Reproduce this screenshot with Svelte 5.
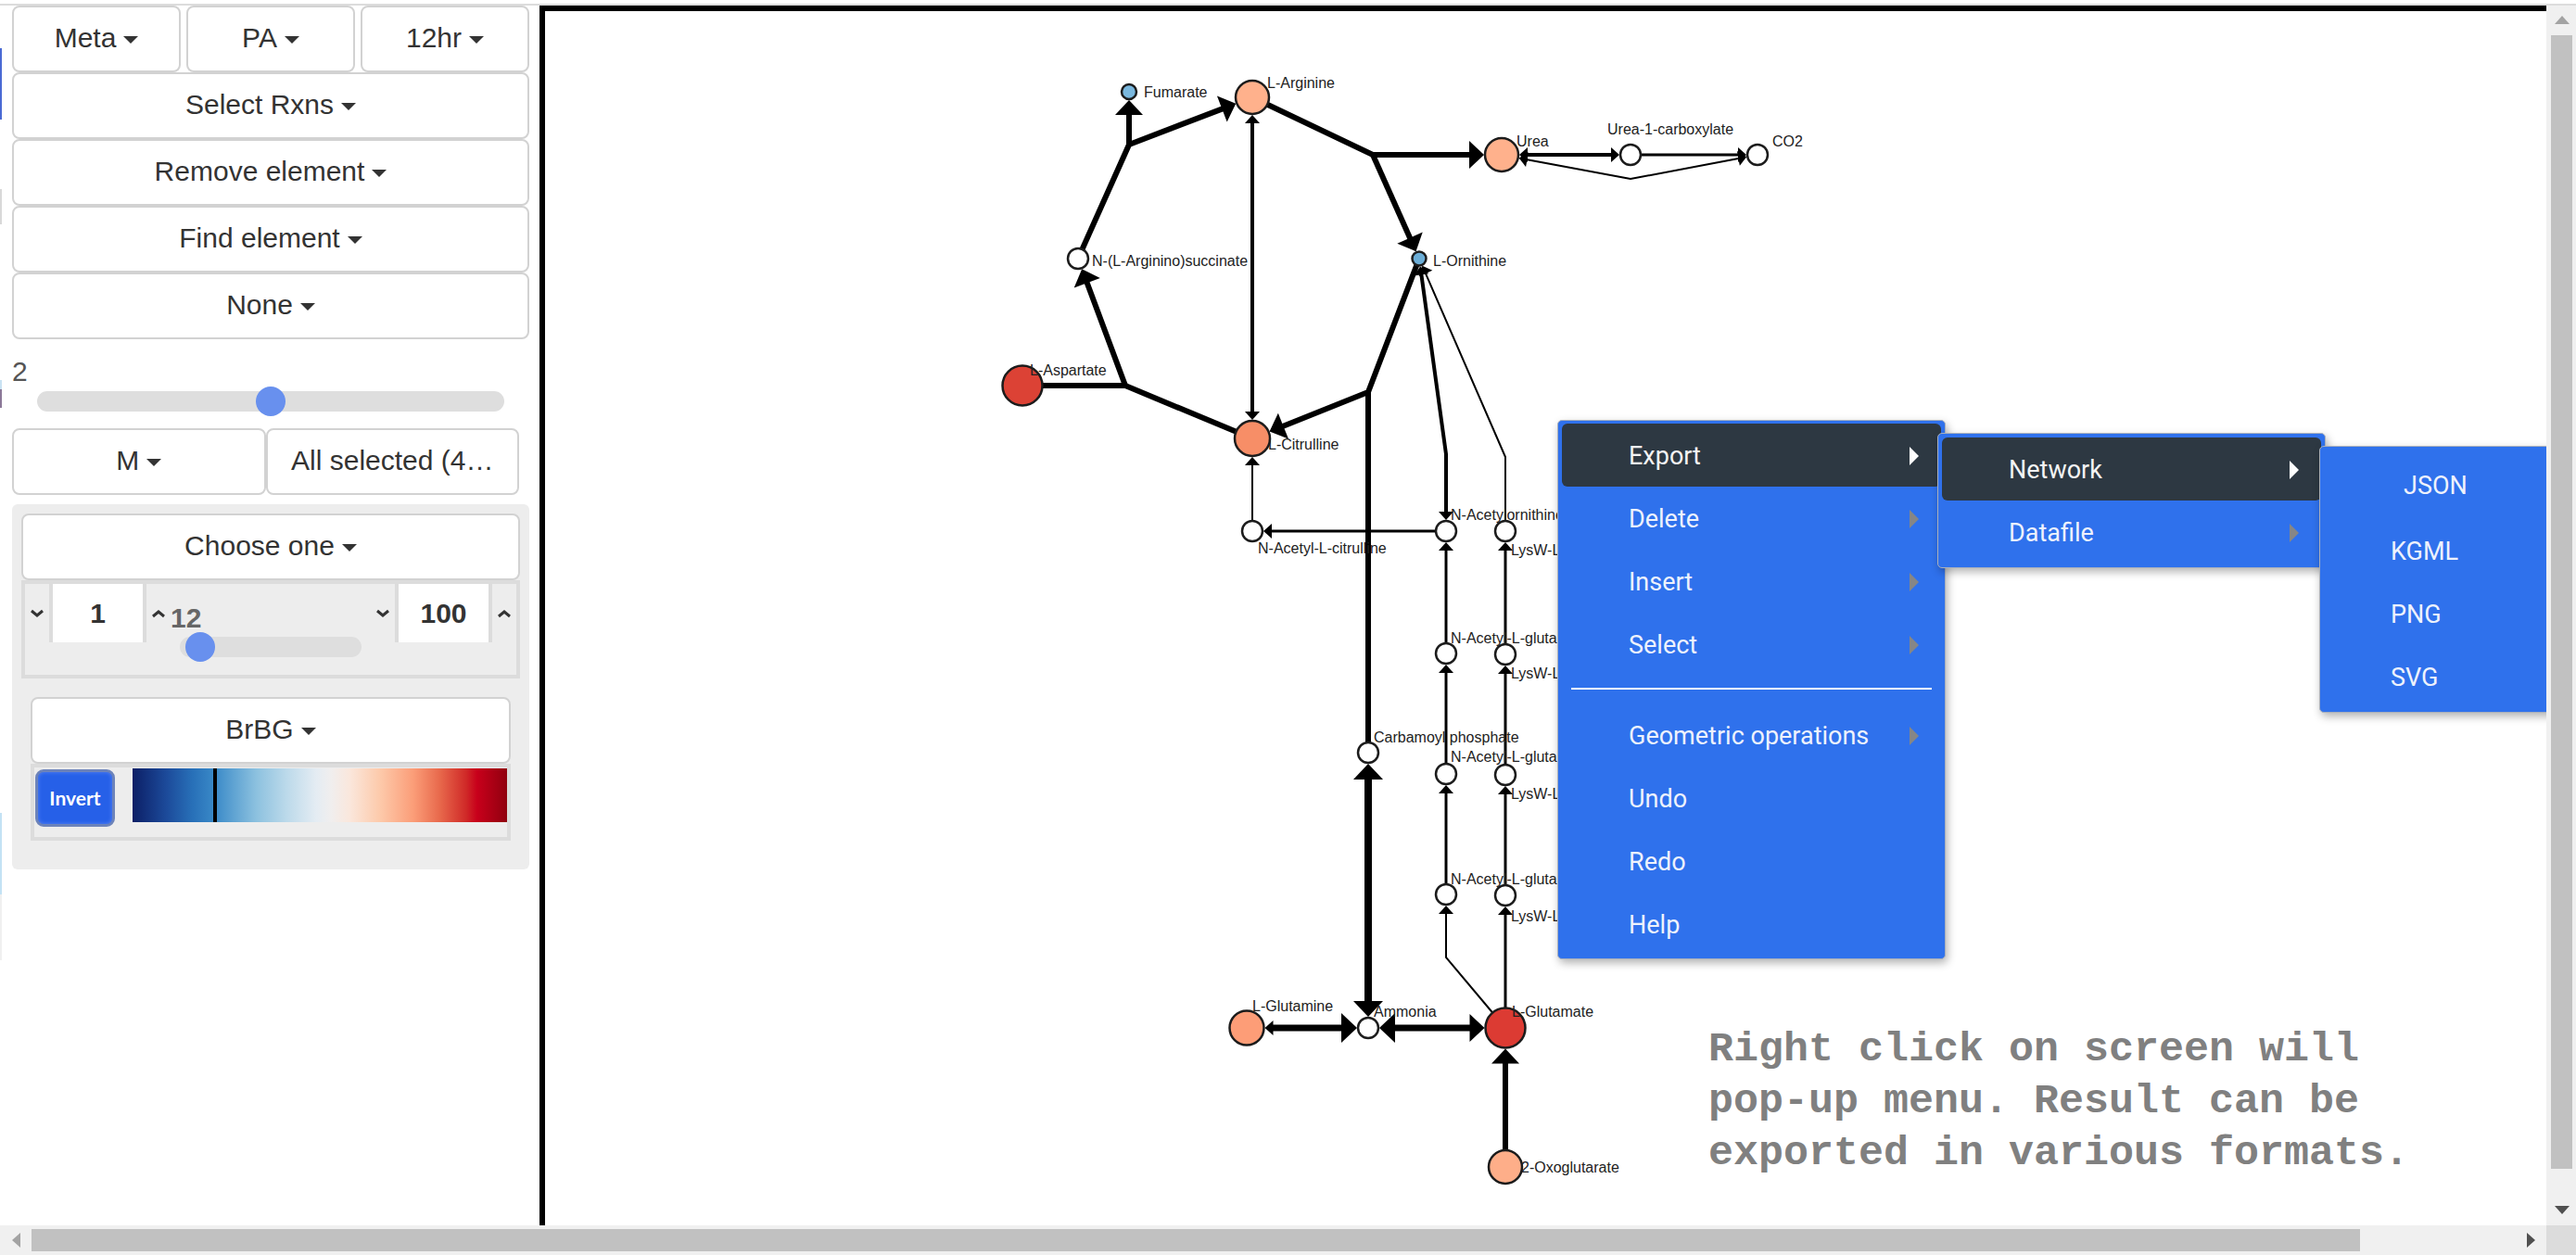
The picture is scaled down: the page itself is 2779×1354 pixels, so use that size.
<script>
  let lineWidth = $state(2);
  let level = $state(12);
  let lower = $state('1');
  let upper = $state('100');
  let scrollY = 97.7;
  let scrollX = 93.7;

  const nodes = {
    fumarate: { x: 630, y: 87, r: 8, fill: '#7ab8de' },
    arginine: { x: 763, y: 93, r: 18, fill: '#ffb18c' },
    argSucc: { x: 575, y: 267, r: 11, fill: '#ffffff' },
    aspartate: { x: 515, y: 404, r: 21.5, fill: '#dc4235' },
    citrulline: { x: 763, y: 461, r: 19, fill: '#f78e67' },
    ornithine: { x: 943, y: 267, r: 7.5, fill: '#6badd6' },
    urea: { x: 1032, y: 155, r: 18, fill: '#ffb18c' },
    ureaCarb: { x: 1171, y: 155, r: 11, fill: '#ffffff' },
    co2: { x: 1308, y: 155, r: 11, fill: '#ffffff' },
    acCit: { x: 763, y: 561, r: 11, fill: '#ffffff' },
    ac1: { x: 972, y: 561, r: 11, fill: '#ffffff' },
    ac2: { x: 972, y: 693, r: 11, fill: '#ffffff' },
    ac3: { x: 972, y: 823, r: 11, fill: '#ffffff' },
    ac4: { x: 972, y: 953, r: 11, fill: '#ffffff' },
    lys1: { x: 1036, y: 561, r: 11, fill: '#ffffff' },
    lys2: { x: 1036, y: 694, r: 11, fill: '#ffffff' },
    lys3: { x: 1036, y: 824, r: 11, fill: '#ffffff' },
    lys4: { x: 1036, y: 954, r: 11, fill: '#ffffff' },
    carbamoyl: { x: 888, y: 800, r: 11, fill: '#ffffff' },
    ammonia: { x: 888, y: 1097, r: 11, fill: '#ffffff' },
    glutamate: { x: 1036, y: 1097, r: 21.5, fill: '#dc3b33' },
    glutamine: { x: 757, y: 1097, r: 18.5, fill: '#fd9d77' },
    oxoglutarate: { x: 1036, y: 1247, r: 18, fill: '#feae89' }
  };

  // Reaction junctions and bends, which have no marker of their own.
  const joints = {
    jFum: { x: 630, y: 144, r: 0 },
    jAsp: { x: 626, y: 404, r: 0 },
    jCarb: { x: 888, y: 411, r: 0 },
    jUrea: { x: 893, y: 155, r: 0 },
    bAc: { x: 972, y: 478, r: 0 },
    bLys: { x: 1036, y: 481, r: 0 },
    bGlu: { x: 972, y: 1021, r: 0 },
    bCo2: { x: 1171, y: 181, r: 0 }
  };
  const all = { ...nodes, ...joints };

  // [path, stroke width, arrow size at start, arrow size at end]
  const edges = [
    [['argSucc', 'jFum', 'fumarate'], 6, 0, 15],
    [['jFum', 'arginine'], 6, 0, 15],
    [['arginine', 'jUrea', 'urea'], 6, 0, 15],
    [['jUrea', 'ornithine'], 6, 0, 15],
    [['ornithine', 'jCarb', 'citrulline'], 6, 0, 15],
    [['jCarb', 'carbamoyl'], 6, 0, 0],
    [['aspartate', 'jAsp', 'argSucc'], 6, 0, 15],
    [['citrulline', 'jAsp'], 6, 0, 0],
    [['arginine', 'citrulline'], 4, 8, 8],
    [['acCit', 'citrulline'], 2, 0, 8],
    [['ac1', 'acCit'], 3, 0, 8],
    [['ornithine', 'bAc', 'ac1'], 4, 8, 8],
    [['ornithine', 'bLys', 'lys1'], 2, 8, 0],
    [['ac2', 'ac1'], 3, 0, 8],
    [['ac3', 'ac2'], 3, 0, 8],
    [['ac4', 'ac3'], 3, 0, 8],
    [['glutamate', 'bGlu', 'ac4'], 2, 0, 8],
    [['lys2', 'lys1'], 3, 0, 8],
    [['lys3', 'lys2'], 3, 0, 8],
    [['lys4', 'lys3'], 3, 0, 8],
    [['glutamate', 'lys4'], 3, 0, 8],
    [['carbamoyl', 'ammonia'], 8, 16, 16],
    [['glutamine', 'ammonia'], 7, 8, 16],
    [['ammonia', 'glutamate'], 7, 16, 15],
    [['oxoglutarate', 'glutamate'], 6, 0, 15],
    [['urea', 'ureaCarb'], 4, 8, 8],
    [['ureaCarb', 'co2'], 3, 0, 8],
    [['urea', 'bCo2', 'co2'], 2, 8, 8]
  ];

  function head(at, toward, size) {
    const dx = toward.x - at.x;
    const dy = toward.y - at.y;
    const len = Math.hypot(dx, dy);
    const ux = dx / len;
    const uy = dy / len;
    const tx = at.x + ux * (at.r + 1);
    const ty = at.y + uy * (at.r + 1);
    const bx = tx + ux * (size + 1);
    const by = ty + uy * (size + 1);
    return `${tx},${ty} ${bx - uy * size},${by + ux * size} ${bx + uy * size},${by - ux * size}`;
  }

  const drawn = edges.map(([path, width, start, end]) => {
    const pts = path.map((id) => all[id]);
    const n = pts.length;
    // Stop the line inside its arrow head, so that the tip stays sharp.
    const trimmed = pts.map((p, i) => {
      const size = i === 0 ? start : i === n - 1 ? end : 0;
      if (!size) return p;
      const q = i === 0 ? pts[1] : pts[n - 2];
      const len = Math.hypot(q.x - p.x, q.y - p.y);
      const cut = p.r + size / 2 + 2;
      return { x: p.x + ((q.x - p.x) / len) * cut, y: p.y + ((q.y - p.y) / len) * cut };
    });
    const heads = [];
    if (start) heads.push(head(pts[0], pts[1], start));
    if (end) heads.push(head(pts[n - 1], pts[n - 2], end));
    return { width, line: trimmed.map((p) => `${p.x},${p.y}`).join(' '), heads };
  });

  const labels = [
    ['Fumarate', 646, 93],
    ['L-Arginine', 779, 83],
    ['N-(L-Arginino)succinate', 590, 275],
    ['L-Ornithine', 958, 275],
    ['L-Aspartate', 523, 393],
    ['L-Citrulline', 780, 473],
    ['N-Acetyl-L-citrulline', 769, 585],
    ['Urea', 1048, 146],
    ['Urea-1-carboxylate', 1146, 133],
    ['CO2', 1324, 146],
    ['N-Acetylornithine', 977, 549],
    ['LysW-L-ornithine', 1042, 587],
    ['N-Acetyl-L-glutamate', 977, 682],
    ['LysW-L-glutamate', 1042, 720],
    ['N-Acetyl-L-glutamyl', 977, 810],
    ['LysW-L-glutamyl', 1042, 850],
    ['N-Acetyl-L-glutamate', 977, 942],
    ['LysW-L-glutamate', 1042, 982],
    ['Carbamoyl phosphate', 894, 789],
    ['L-Glutamine', 763, 1079],
    ['Ammonia', 894, 1085],
    ['L-Glutamate', 1043, 1085],
    ['2-Oxoglutarate', 1053, 1253]
  ];

  const mainMenu = [
    { text: 'Export', sub: true, active: true },
    { text: 'Delete', sub: true },
    { text: 'Insert', sub: true },
    { text: 'Select', sub: true },
    { rule: true },
    { text: 'Geometric operations', sub: true },
    { text: 'Undo' },
    { text: 'Redo' },
    { text: 'Help' }
  ];
  const exportMenu = [
    { text: 'Network', sub: true, active: true },
    { text: 'Datafile', sub: true }
  ];
  const formatMenu = [{ text: 'JSON', first: true }, { text: 'KGML' }, { text: 'PNG' }, { text: 'SVG' }];
</script>

{#snippet drop(text)}
  <button type="button" class="drop"><span>{text}</span><i class="caret"></i></button>
{/snippet}

{#snippet chevron(up, name)}
  <button type="button" class="step" aria-label={name}>
    <svg width="14" height="10" viewBox="0 0 14 10" aria-hidden="true">
      <path d={up ? 'M1 8 L7 3 L13 8' : 'M1 2 L7 7 L13 2'} fill="none" stroke="#333" stroke-width="3" />
    </svg>
  </button>
{/snippet}

{#snippet menu(items, place)}
  <ul class="menu {place}">
    {#each items as item}
      {#if item.rule}
        <li class="rule"></li>
      {:else}
        <li>
          <button type="button" class="item" class:active={item.active} class:first={item.first}>
            <span>{item.text}</span>
            {#if item.sub}<i class="more"></i>{/if}
          </button>
        </li>
      {/if}
    {/each}
  </ul>
{/snippet}

<div class="app">
  <div class="topline"></div>
  <div class="edge"></div>

  <aside class="side">
    <div class="trio">
      {@render drop('Meta')}
      {@render drop('PA')}
      {@render drop('12hr')}
    </div>
    {@render drop('Select Rxns')}
    {@render drop('Remove element')}
    {@render drop('Find element')}
    {@render drop('None')}

    <label class="value" for="line-width">{lineWidth}</label>
    <input id="line-width" class="range wide" type="range" min="0" max="4" step="1" bind:value={lineWidth} />

    <div class="pair">
      {@render drop('M')}
      <button type="button" class="drop"><span>All selected (4…</span></button>
    </div>

    <section class="panel">
      {@render drop('Choose one')}
      <div class="box bounds">
        {@render chevron(false, 'Decrease lower bound')}
        <input class="num" type="text" aria-label="Lower bound" bind:value={lower} />
        {@render chevron(true, 'Increase lower bound')}
        <div class="mid">
          <label class="level" for="level">{level}</label>
          <input id="level" class="range" type="range" min="6" max="170" bind:value={level} />
        </div>
        {@render chevron(false, 'Decrease upper bound')}
        <input class="num" type="text" aria-label="Upper bound" bind:value={upper} />
        {@render chevron(true, 'Increase upper bound')}
      </div>

      <div class="colors">
        {@render drop('BrBG')}
        <div class="box scale">
          <button type="button" class="invert">Invert</button>
          <div class="ramp"><i class="mark"></i></div>
        </div>
      </div>
    </section>
  </aside>

  <main class="canvas">
    <svg class="graph" role="img" aria-label="Metabolic network">
      {#each drawn as edge}
        <polyline points={edge.line} fill="none" stroke="#000" stroke-width={edge.width} />
        {#each edge.heads as points}
          <polygon {points} />
        {/each}
      {/each}
      {#each Object.values(nodes) as node}
        <circle cx={node.x} cy={node.y} r={node.r} fill={node.fill} stroke="#1c1c1c" stroke-width="2.5" />
      {/each}
      {#each labels as [text, x, y]}
        <text {x} {y}>{text}</text>
      {/each}
    </svg>

    {@render menu(mainMenu, 'root')}
    {@render menu(exportMenu, 'second')}
    {@render menu(formatMenu, 'third')}

    <p class="note">
      Right click on screen will<br />pop-up menu. Result can be<br />exported in various formats.
    </p>
  </main>

  <div class="bar vert">
    <button type="button" class="arrow" aria-label="Scroll up">
      <svg width="16" height="10" viewBox="0 0 16 10" aria-hidden="true"><path d="M0 9 L8 0 L16 9Z" fill="#a3a3a3" /></svg>
    </button>
    <div class="track"><div class="thumb" style:height="{scrollY}%"></div></div>
    <button type="button" class="arrow" aria-label="Scroll down">
      <svg width="16" height="10" viewBox="0 0 16 10" aria-hidden="true"><path d="M0 0 L8 9 L16 0Z" fill="#505050" /></svg>
    </button>
  </div>

  <div class="bar horiz">
    <button type="button" class="arrow" aria-label="Scroll left">
      <svg width="10" height="16" viewBox="0 0 10 16" aria-hidden="true"><path d="M9 0 L0 8 L9 16Z" fill="#a3a3a3" /></svg>
    </button>
    <div class="track"><div class="thumb" style:width="{scrollX}%"></div></div>
    <button type="button" class="arrow" aria-label="Scroll right">
      <svg width="10" height="16" viewBox="0 0 10 16" aria-hidden="true"><path d="M0 0 L9 8 L0 16Z" fill="#505050" /></svg>
    </button>
  </div>
  <div class="corner"></div>
</div>

<style>
  :global(body) {
    margin: 0;
    background: #fff;
  }
  .app,
  .app :global(*) {
    box-sizing: border-box;
  }
  .app {
    display: grid;
    grid-template-columns: 2px 580px minmax(0, 1fr) 32px;
    grid-template-rows: 6px minmax(0, 1fr) 32px;
    height: 100vh;
    overflow: hidden;
    font-family: 'Liberation Sans', Arial, sans-serif;
    font-size: 30px;
    color: #333;
  }
  button,
  input {
    font: inherit;
    color: inherit;
    margin: 0;
  }
  .topline {
    grid-column: 1 / -1;
    margin-top: 4px;
    background: #dcdcdc;
  }
  .edge {
    background: linear-gradient(
      #fff 46px,
      #4a6ad4 46px 123px,
      #fff 123px 198px,
      #d8d8d8 198px 236px,
      #fff 236px 404px,
      #c9e2f2 404px 414px,
      #8b7898 414px 434px,
      #fff 434px 871px,
      #c3e2f4 871px 959px,
      #f0f0f0 959px 1030px,
      #fff 1030px
    );
  }

  .side {
    padding: 0 11px;
  }
  .trio,
  .pair {
    display: flex;
    gap: 6px;
  }
  .pair {
    gap: 0;
    margin: 13px 11px 10px 0;
  }
  .drop {
    display: flex;
    align-items: center;
    justify-content: center;
    gap: 8px;
    width: 100%;
    height: 72px;
    padding: 0 8px 2px;
    background: #fff;
    border: 2px solid #d2d2d2;
    border-radius: 8px;
    white-space: nowrap;
  }
  .trio .drop,
  .pair .drop {
    flex: 1 1 0;
    min-width: 0;
  }
  .caret {
    border: 8px solid transparent;
    border-top-color: #333;
    border-bottom: 0;
    margin-top: 4px;
  }
  .value {
    display: block;
    margin-top: 19px;
    line-height: 31px;
    color: #555;
  }

  .range {
    appearance: none;
    display: block;
    height: 32px;
    background: transparent;
  }
  .wide {
    width: calc(100% - 54px);
    margin: 1px 27px 0;
  }
  .range::-webkit-slider-runnable-track {
    height: 22px;
    border-radius: 11px;
    background: #dedede;
  }
  .range::-webkit-slider-thumb {
    appearance: none;
    width: 32px;
    height: 32px;
    margin-top: -5px;
    border-radius: 50%;
    background: #6890ee;
  }

  .panel {
    padding: 10px 10px 31px;
    border-radius: 6px;
    background: #ededed;
  }
  .box {
    display: flex;
    border: 4px solid #dcdcdc;
  }
  .bounds {
    height: 106px;
    font-weight: bold;
  }
  .step {
    display: flex;
    align-items: center;
    justify-content: center;
    width: 26px;
    height: 63px;
    padding: 0;
    border: 0;
    background: none;
  }
  .num {
    width: 105px;
    height: 63px;
    padding: 0;
    border: solid #dcdcdc;
    border-width: 0 4px;
    border-radius: 0;
    background: #fff;
    text-align: center;
  }
  .mid {
    flex: 1;
    min-width: 0;
  }
  .level {
    display: block;
    padding-top: 21px;
    line-height: 31px;
    color: #666;
  }
  .mid .range {
    width: calc(100% - 20px);
    margin: 0 10px;
  }
  .colors {
    margin: 20px 10px 0;
  }
  .scale {
    height: 83px;
    align-items: flex-start;
    gap: 19px;
  }
  .invert {
    flex: none;
    width: 86px;
    height: 62px;
    margin: 2px 0 0 1px;
    padding: 0 0 2px;
    border: 3px solid #6c83ba;
    border-radius: 9px;
    background: #2660e8;
    box-shadow: inset 0 0 4px #5c86f2;
    color: #fff;
    font-family: Lato, sans-serif;
    font-size: 21px;
    font-weight: bold;
  }
  .ramp {
    display: flex;
    flex: 1;
    height: 58px;
    margin-top: 1px;
    padding-left: 87px;
    background: linear-gradient(
      90deg,
      #0c1f66 0%,
      #1c4a9a 9%,
      #2870b8 16%,
      #3a8ac8 22%,
      #8cc1df 33%,
      #bbd9ea 41%,
      #e4ecf3 49%,
      #f0eeee 53%,
      #fae7dc 58%,
      #fdcaab 66%,
      #fb9d78 75%,
      #e8694c 82%,
      #d02a28 89%,
      #c8001b 92%,
      #90000f 100%
    );
  }
  .mark {
    width: 4px;
    background: #000;
  }

  .canvas {
    position: relative;
    overflow: hidden;
    border: solid #000;
    border-width: 6px 0 0 6px;
  }
  .graph {
    display: block;
    width: 100%;
    height: 100%;
  }
  .graph text {
    font-size: 16px;
    fill: #222;
  }

  .menu {
    position: absolute;
    width: 419px;
    margin: 0;
    padding: 3px 4px;
    list-style: none;
    background: #2f71ec;
    border: 1px solid #a9b0bc;
    border-radius: 5px;
    box-shadow: 2px 4px 10px rgba(0, 0, 0, 0.3);
    font-family: Roboto, sans-serif;
    font-size: 27px;
    color: #eef2fc;
  }
  .root {
    left: 1092px;
    top: 441px;
  }
  .second {
    left: 1502px;
    top: 455px;
    padding: 4px;
  }
  .third {
    left: 1914px;
    top: 469px;
    padding: 4px;
  }
  .item {
    display: flex;
    align-items: center;
    justify-content: space-between;
    width: 100%;
    height: 68px;
    padding: 2px 24px 0 72px;
    border: 0;
    border-radius: 6px;
    background: none;
    text-align: left;
  }
  .item.active {
    background: #2d3842;
    color: #f4f4f4;
  }
  .item.first {
    height: 74px;
    padding-left: 86px;
  }
  .more {
    border: 10px solid transparent;
    border-left-color: #868686;
    border-right: 0;
  }
  .active .more {
    border-left-color: #fff;
  }
  .rule {
    height: 2px;
    margin: 13px 10px 15px;
    background: #fff;
  }
  .note {
    position: absolute;
    left: 1255px;
    top: 1093px;
    margin: 0;
    font: bold 45px/56px 'Liberation Mono', monospace;
    color: #808080;
    white-space: nowrap;
  }

  .bar {
    display: flex;
    background: #f0f0f0;
  }
  .vert {
    flex-direction: column;
    padding: 0 4px 0 5px;
  }
  .horiz {
    grid-column: 1 / 4;
    padding: 4px 0 4px 2px;
  }
  .arrow {
    display: flex;
    flex: none;
    align-items: center;
    justify-content: center;
    padding: 0;
    border: 0;
    background: none;
  }
  .vert .arrow {
    height: 32px;
  }
  .horiz .arrow {
    width: 32px;
  }
  .track {
    display: flex;
    flex: 1;
    min-height: 0;
  }
  .thumb {
    background: #c1c1c1;
  }
  .vert .thumb {
    width: 100%;
  }
  .corner {
    background: #dcdcdc;
  }
</style>
